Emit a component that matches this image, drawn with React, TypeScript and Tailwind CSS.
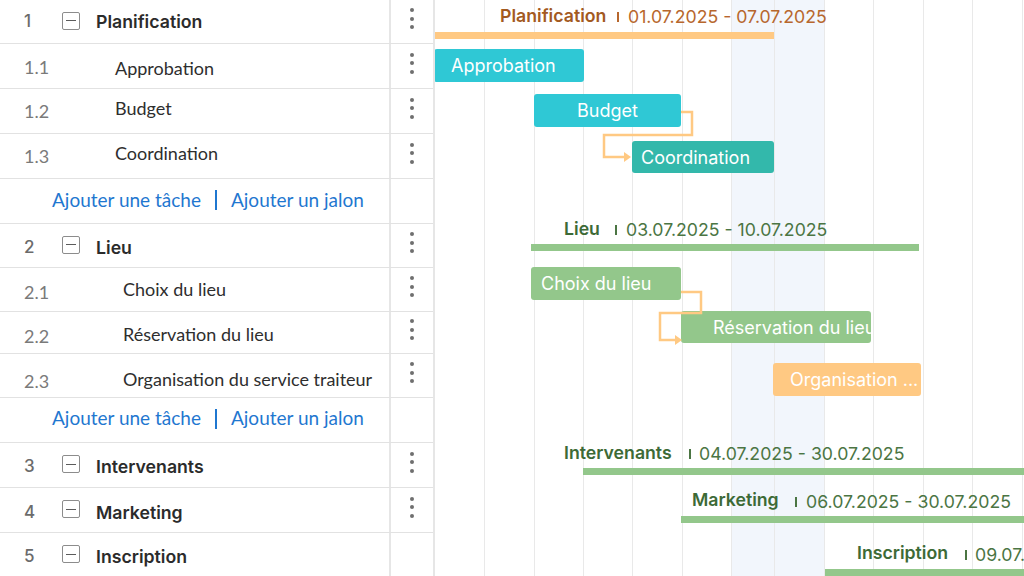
import React from "react";

type Row =
  | { kind: "group"; num: string; name: string; h: string; numCls?: string; nameCls?: string; dots: boolean }
  | { kind: "task"; num: string; name: string; h: string; numW: string; numCls?: string; nameCls?: string }
  | { kind: "links"; h: string; cls?: string };

const rows: Row[] = [
  { kind: "group", num: "1", name: "Planification", h: "h-[44px]", numCls: "mt-[1px]", nameCls: "mt-[1px]", dots: true },
  { kind: "task", num: "1.1", name: "Approbation", h: "h-[45px]", numW: "w-[115px]", numCls: "mt-[3px]", nameCls: "mt-[5px]" },
  { kind: "task", num: "1.2", name: "Budget", h: "h-[45px]", numW: "w-[115px]", numCls: "mt-[1px]", nameCls: "mb-[6px]" },
  { kind: "task", num: "1.3", name: "Coordination", h: "h-[45px]", numW: "w-[115px]", numCls: "mt-[1px]", nameCls: "mb-[6px]" },
  { kind: "links", h: "h-[45px]", cls: "mb-[2px]" },
  { kind: "group", num: "2", name: "Lieu", h: "h-[44px]", numCls: "mt-[5px]", nameCls: "mt-[6px]", dots: true },
  { kind: "task", num: "2.1", name: "Choix du lieu", h: "h-[44px]", numW: "w-[123px]", numCls: "mt-[5px]" },
  { kind: "task", num: "2.2", name: "Réservation du lieu", h: "h-[42px]", numW: "w-[123px]", numCls: "mt-[7px]", nameCls: "mt-[3px]" },
  { kind: "task", num: "2.3", name: "Organisation du service traiteur", h: "h-[44px]", numW: "w-[123px]", numCls: "mt-[11px]", nameCls: "mt-[8px]" },
  { kind: "links", h: "h-[45px]", cls: "mb-[3px]" },
  { kind: "group", num: "3", name: "Intervenants", h: "h-[45px]", numCls: "mt-[4px]", nameCls: "mt-[5px]", dots: true },
  { kind: "group", num: "4", name: "Marketing", h: "h-[45px]", numCls: "mt-[5px]", nameCls: "mt-[6px]", dots: true },
  { kind: "group", num: "5", name: "Inscription", h: "h-[45px]", numCls: "mt-[4px]", nameCls: "mt-[4px]", dots: false },
];

function Dots() {
  return (
    <div className="flex flex-col gap-[4.5px] mb-[6px]">
      <span className="w-[4px] h-[4px] rounded-full bg-[#6f6f6f]"></span>
      <span className="w-[4px] h-[4px] rounded-full bg-[#6f6f6f]"></span>
      <span className="w-[4px] h-[4px] rounded-full bg-[#6f6f6f]"></span>
    </div>
  );
}

function TaskList() {
  return (
    <div className="w-[435px] shrink-0 border-r-2 border-[#e6e6e6] bg-white">
      {rows.map((row, i) => (
        <div key={i} className={`flex ${row.h} border-b border-[#e2e2e2]`}>
          <div className="w-[389px] flex items-center">
            {row.kind === "group" && (
              <>
                <span className={`w-[62px] pl-[24px] font-[Inter,sans-serif] font-medium text-[17px] text-[#6b6b6b] ${row.numCls ?? ""}`}>
                  {row.num}
                </span>
                <span className="w-[18px] h-[18px] border border-[#8c8c8c] rounded-[2px] flex items-center justify-center mb-[2px]">
                  <span className="w-[10px] h-px bg-[#5c5c5c]"></span>
                </span>
                <span className={`ml-[16px] font-[Inter,sans-serif] font-semibold text-[17.7px] text-[#2b2b2b] ${row.nameCls ?? ""}`}>
                  {row.name}
                </span>
              </>
            )}
            {row.kind === "task" && (
              <>
                <span className={`${row.numW} pl-[24px] font-[Lato,sans-serif] text-[18px] text-[#7a7a7a] ${row.numCls ?? ""}`}>
                  {row.num}
                </span>
                <span className={`font-[Lato,sans-serif] text-[18px] text-[#2e2e2e] ${row.nameCls ?? ""}`}>
                  {row.name}
                </span>
              </>
            )}
            {row.kind === "links" && (
              <div className={`flex items-center pl-[52px] font-[Lato,sans-serif] text-[19px] text-[#1f77d0] ${row.cls ?? ""}`}>
                <span>Ajouter une tâche</span>
                <span className="mx-[14px] w-[2px] h-[20px] bg-[#1f77d0]"></span>
                <span>Ajouter un jalon</span>
              </div>
            )}
          </div>
          <div className="w-[44px] border-l-2 border-[#e6e6e6] flex items-center justify-center">
            {(row.kind === "task" || (row.kind === "group" && row.dots)) && <Dots />}
          </div>
        </div>
      ))}
    </div>
  );
}

const gridLines = [
  "left-[49px]", "left-[99px]", "left-[148px]", "left-[197px]", "left-[247px]", "left-[296px]",
  "left-[339px]", "left-[389px]", "left-[438px]", "left-[488px]", "left-[537px]", "left-[587px]",
];

type Summary = {
  label: string;
  dates: string;
  brown?: boolean;
  labelPos: string;
  sepPos: string;
  datePos: string;
  bar: string;
};

const summaries: Summary[] = [
  { label: "Planification", dates: "01.07.2025 - 07.07.2025", brown: true, labelPos: "left-[65px] top-[6px]", sepPos: "left-[182px] top-[12px]", datePos: "left-[193px] top-[7px]", bar: "left-0 w-[339px] top-[32px]" },
  { label: "Lieu", dates: "03.07.2025 - 10.07.2025", labelPos: "left-[129px] top-[219px]", sepPos: "left-[180px] top-[225px]", datePos: "left-[191px] top-[220px]", bar: "left-[96px] w-[388px] top-[244px]" },
  { label: "Intervenants", dates: "04.07.2025 - 30.07.2025", labelPos: "left-[129px] top-[443px]", sepPos: "left-[254px] top-[449px]", datePos: "left-[264px] top-[444px]", bar: "left-[148px] w-[460px] top-[468px]" },
  { label: "Marketing", dates: "06.07.2025 - 30.07.2025", labelPos: "left-[257px] top-[490px]", sepPos: "left-[360px] top-[497px]", datePos: "left-[371px] top-[492px]", bar: "left-[246px] w-[360px] top-[516px]" },
  { label: "Inscription", dates: "09.07.2025 - 30.07.2025", labelPos: "left-[422px] top-[543px]", sepPos: "left-[530px] top-[550px]", datePos: "left-[540px] top-[545px]", bar: "left-[390px] w-[300px] top-[569px]" },
];

type Bar = { text: string; pos: string; color: string; pad: string };

const bars: Bar[] = [
  { text: "Approbation", pos: "left-[-1px] top-[49px] w-[150px] h-[33px]", color: "bg-[#2fc8d5]", pad: "pl-[17px]" },
  { text: "Budget", pos: "left-[99px] top-[94px] w-[147px] h-[33px]", color: "bg-[#2fc8d5]", pad: "justify-center" },
  { text: "Coordination", pos: "left-[197px] top-[141px] w-[142px] h-[32px]", color: "bg-[#33b8ab]", pad: "pl-[9px]" },
  { text: "Choix du lieu", pos: "left-[96px] top-[267px] w-[150px] h-[33px]", color: "bg-[#93c78b]", pad: "pl-[10px]" },
  { text: "Réservation du lieu", pos: "left-[246px] top-[311px] w-[190px] h-[32px]", color: "bg-[#93c78b]", pad: "pl-[32px]" },
  { text: "Organisation ...", pos: "left-[338px] top-[363px] w-[148px] h-[33px]", color: "bg-[#ffc983]", pad: "pl-[17px]" },
];

function Chart() {
  return (
    <div className="relative flex-1 h-[576px] overflow-hidden bg-white">
      <div className="absolute left-[296px] w-[93px] top-0 bottom-0 bg-[#f2f6fc]"></div>
      {gridLines.map((g) => (
        <div key={g} className={`absolute ${g} top-0 bottom-0 w-px bg-[#e9e9e9]`}></div>
      ))}

      {summaries.map((s) => (
        <React.Fragment key={s.label}>
          <span className={`absolute ${s.labelPos} leading-[20px] whitespace-nowrap font-[Inter,sans-serif] font-semibold text-[17.7px] ${s.brown ? "text-[#a35a1f]" : "text-[#3d6a36]"}`}>
            {s.label}
          </span>
          <span className={`absolute ${s.sepPos} w-[1.5px] h-[10px] ${s.brown ? "bg-[#b7672d]" : "bg-[#4b7543]"}`}></span>
          <span className={`absolute ${s.datePos} leading-[20px] whitespace-nowrap font-[Inter,sans-serif] text-[17.7px] ${s.brown ? "text-[#b7672d]" : "text-[#4b7543]"}`}>
            {s.dates}
          </span>
          <div className={`absolute ${s.bar} h-[7px] ${s.brown ? "bg-[#ffc983]" : "bg-[#93c78b]"}`}></div>
        </React.Fragment>
      ))}

      {bars.map((b) => (
        <div
          key={b.text}
          className={`absolute ${b.pos} ${b.color} ${b.pad} rounded-[3px] flex items-center overflow-hidden whitespace-nowrap font-[Inter,sans-serif] text-[18px] text-white`}
        >
          {b.text}
        </div>
      ))}

      {/* liens de dépendance */}
      <svg className="absolute left-0 top-0" width="589" height="576" fill="none">
        <path d="M246 112 H257 V135 H169 V157 H191" stroke="#ffc983" strokeWidth="2.5" />
        <path d="M189 152 L196 157 L189 162 Z" fill="#ffc983" />
        <path d="M246 292 H266 V313 H225 V340 H242" stroke="#ffc983" strokeWidth="2.5" />
        <path d="M240 335 L247 340 L240 345 Z" fill="#ffc983" />
      </svg>
    </div>
  );
}

export default function App() {
  return (
    <div className="flex w-[1024px] h-[576px] overflow-hidden bg-white">
      <TaskList />
      <Chart />
    </div>
  );
}
